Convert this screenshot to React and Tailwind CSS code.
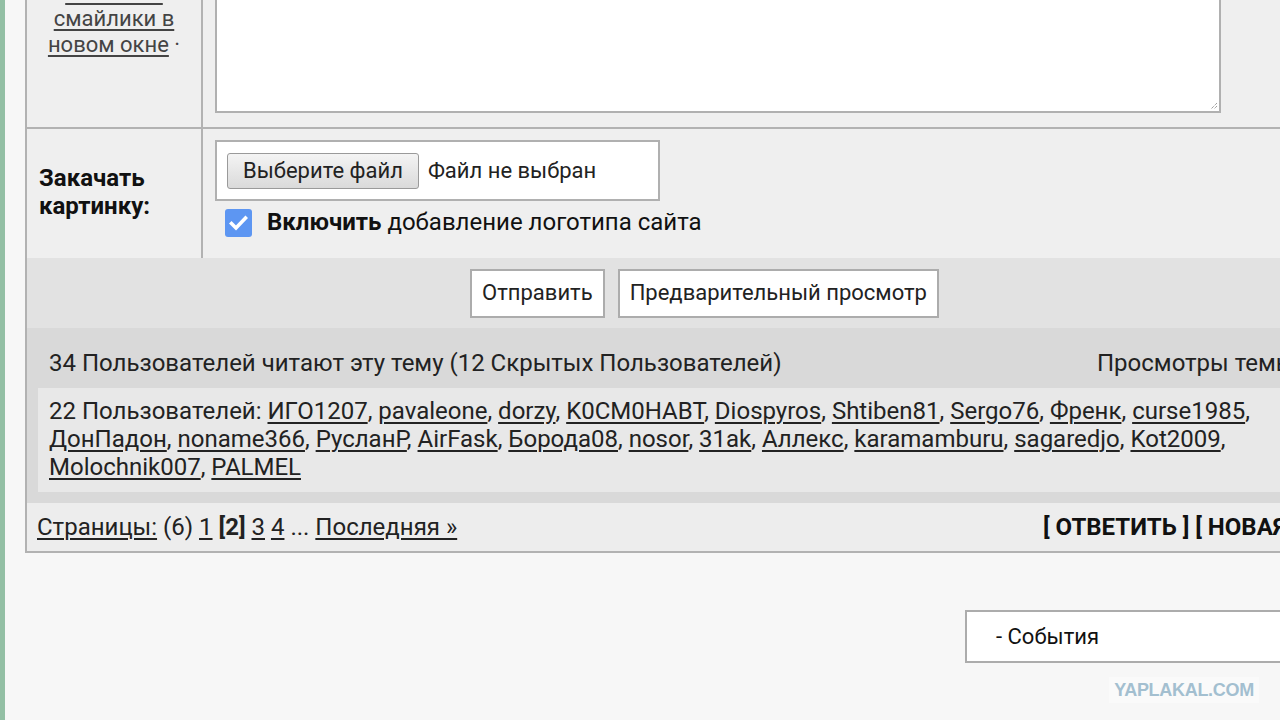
import React from "react";

const users1 = ["ИГО1207", "pavaleone", "dorzy", "K0CM0HABT", "Diospyros", "Shtiben81", "Sergo76", "Френк", "curse1985"];
const users2 = ["ДонПадон", "noname366", "РусланР", "AirFask", "Борода08", "nosor", "31ak", "Аллекс", "karamamburu", "sagaredjo", "Kot2009"];
const users3 = ["Molochnik007", "PALMEL"];

const link = "underline underline-offset-[3px] decoration-2";

function UserLine({ names, trailing, prefix }) {
  return (
    <div className="whitespace-nowrap">
      {prefix}
      {names.map((n, i) => (
        <React.Fragment key={n}>
          <a className={link}>{n}</a>
          {i < names.length - 1 || trailing ? ", " : ""}
        </React.Fragment>
      ))}
    </div>
  );
}

export default function App() {
  return (
    <div
      className="w-[1280px] h-[720px] overflow-hidden bg-[#f7f7f7] flex text-[#222] text-[24px]"
      style={{ fontFamily: "Roboto, 'Noto Sans', sans-serif" }}
    >
      <div className="w-[5px] shrink-0 bg-[#93bfa4]" />
      <div className="flex flex-col pl-[20px] shrink-0">
        {/* forum reply form */}
        <div className="w-[1357px] border-l-2 border-b-2 border-[#b2b2b2] flex flex-col">
          {/* message row */}
          <div className="flex h-[149px] -mt-[20px] border-b-2 border-[#b2b2b2] bg-[#efefef]">
            <div className="w-[176px] shrink-0 border-r-2 border-[#b2b2b2] flex flex-col items-center text-center leading-[26px] text-[#444] text-[22px]">
              <a className={link}>Показать</a>
              <a className={link}>смайлики в</a>
              <div>
                <a className={link}>новом окне</a> ·
              </div>
            </div>
            <div className="flex-1 pl-[12px] pt-[8px]">
              <div className="relative w-[1006px] h-[125px] bg-white border-2 border-[#b0b0b0]">
                <svg className="absolute right-[1px] bottom-[1px]" width="10" height="10" viewBox="0 0 10 10">
                  <path d="M9 3 L3 9 M9 6 L6 9" stroke="#777" strokeWidth="1" strokeDasharray="1 1" />
                </svg>
              </div>
            </div>
          </div>

          {/* upload row */}
          <div className="flex h-[129px] bg-[#efefef]">
            <div className="w-[176px] shrink-0 border-r-2 border-[#b2b2b2] flex items-center px-[12px] pb-[3px] font-bold leading-[28px] text-[#111]">
              <div>
                Закачать
                <br />
                картинку:
              </div>
            </div>
            <div className="flex-1 pl-[12px] pt-[11px] flex flex-col">
              <div className="w-[445px] h-[61px] bg-white border-2 border-[#b0b0b0] flex items-center pl-[10px] text-[22px]">
                <div className="h-[36px] px-[15px] flex items-center rounded-[3px] border border-[#9a9a9a] bg-gradient-to-b from-[#f4f4f4] to-[#dadada] text-[#222]">
                  Выберите файл
                </div>
                <span className="ml-[9px] text-[#222]">Файл не выбран</span>
              </div>
              <div className="flex items-center mt-[5px] ml-[10px]">
                <div className="w-[27px] h-[28px] rounded-[3px] bg-[#5d96f2] flex items-center justify-center">
                  <svg width="19" height="16" viewBox="0 0 19 16">
                    <path d="M2.5 8.5 L7 13 L16.5 3" fill="none" stroke="#fff" strokeWidth="3.6" strokeLinecap="square" />
                  </svg>
                </div>
                <span className="ml-[15px] text-[#111] -mt-[2px]">
                  <b>Включить</b> добавление логотипа сайта
                </span>
              </div>
            </div>
          </div>

          {/* submit buttons */}
          <div className="h-[70px] bg-[#e2e2e2] flex items-center justify-center gap-[13px]">
            <button className="h-[49px] px-[10px] pb-[2px] bg-white border-2 border-[#acacac] text-[#222] text-[22px]">Отправить</button>
            <button className="h-[49px] px-[10px] pb-[2px] bg-white border-2 border-[#acacac] text-[#222] text-[22px]">Предварительный просмотр</button>
          </div>

          {/* active users */}
          <div className="bg-[#d9d9d9] pt-[21px] pb-[11px]">
            <div className="flex leading-[28px] pb-[11px]">
              <div className="w-[1070px] shrink-0 pl-[22px] whitespace-nowrap">34 Пользователей читают эту тему (12 Скрытых Пользователей)</div>
              <div className="whitespace-nowrap">Просмотры темы: 28175</div>
            </div>
            <div className="ml-[11px] bg-[#e8e8e8] pl-[11px] pt-[9px] pb-[11px] leading-[28px]">
              <UserLine names={users1} trailing prefix="22 Пользователей: " />
              <UserLine names={users2} trailing />
              <UserLine names={users3} />
            </div>
          </div>

          {/* pagination */}
          <div className="h-[48px] bg-[#ededed] flex items-center">
            <div className="w-[1016px] shrink-0 pl-[10px] whitespace-nowrap">
              <a className={link}>Страницы:</a> (6) <a className={link}>1</a> <b>[2]</b>{" "}
              <a className={link}>3</a> <a className={link}>4</a> ... <a className={link}>Последняя »</a>
            </div>
            <div className="font-bold whitespace-nowrap text-[#111]">[ ОТВЕТИТЬ ] [ НОВАЯ ТЕМА ]</div>
          </div>
        </div>

        {/* forum jump */}
        <div className="flex mt-[57px] ml-[940px]">
          <div className="w-[360px] h-[53px] bg-white border-2 border-[#acacac] flex items-center pl-[29px] text-[22px] text-[#111]">
            - События
          </div>
        </div>
        <div className="ml-[1084px] mt-[14px] w-[150px] h-[26px] flex items-center justify-center bg-[#fafafa]">
          <span
            className="font-bold text-[18px] text-[#a3bfd0] tracking-[-0.3px]"
            style={{ fontFamily: "'Liberation Sans', Arial, sans-serif" }}
          >
            YAPLAKAL.COM
          </span>
        </div>
      </div>
    </div>
  );
}
